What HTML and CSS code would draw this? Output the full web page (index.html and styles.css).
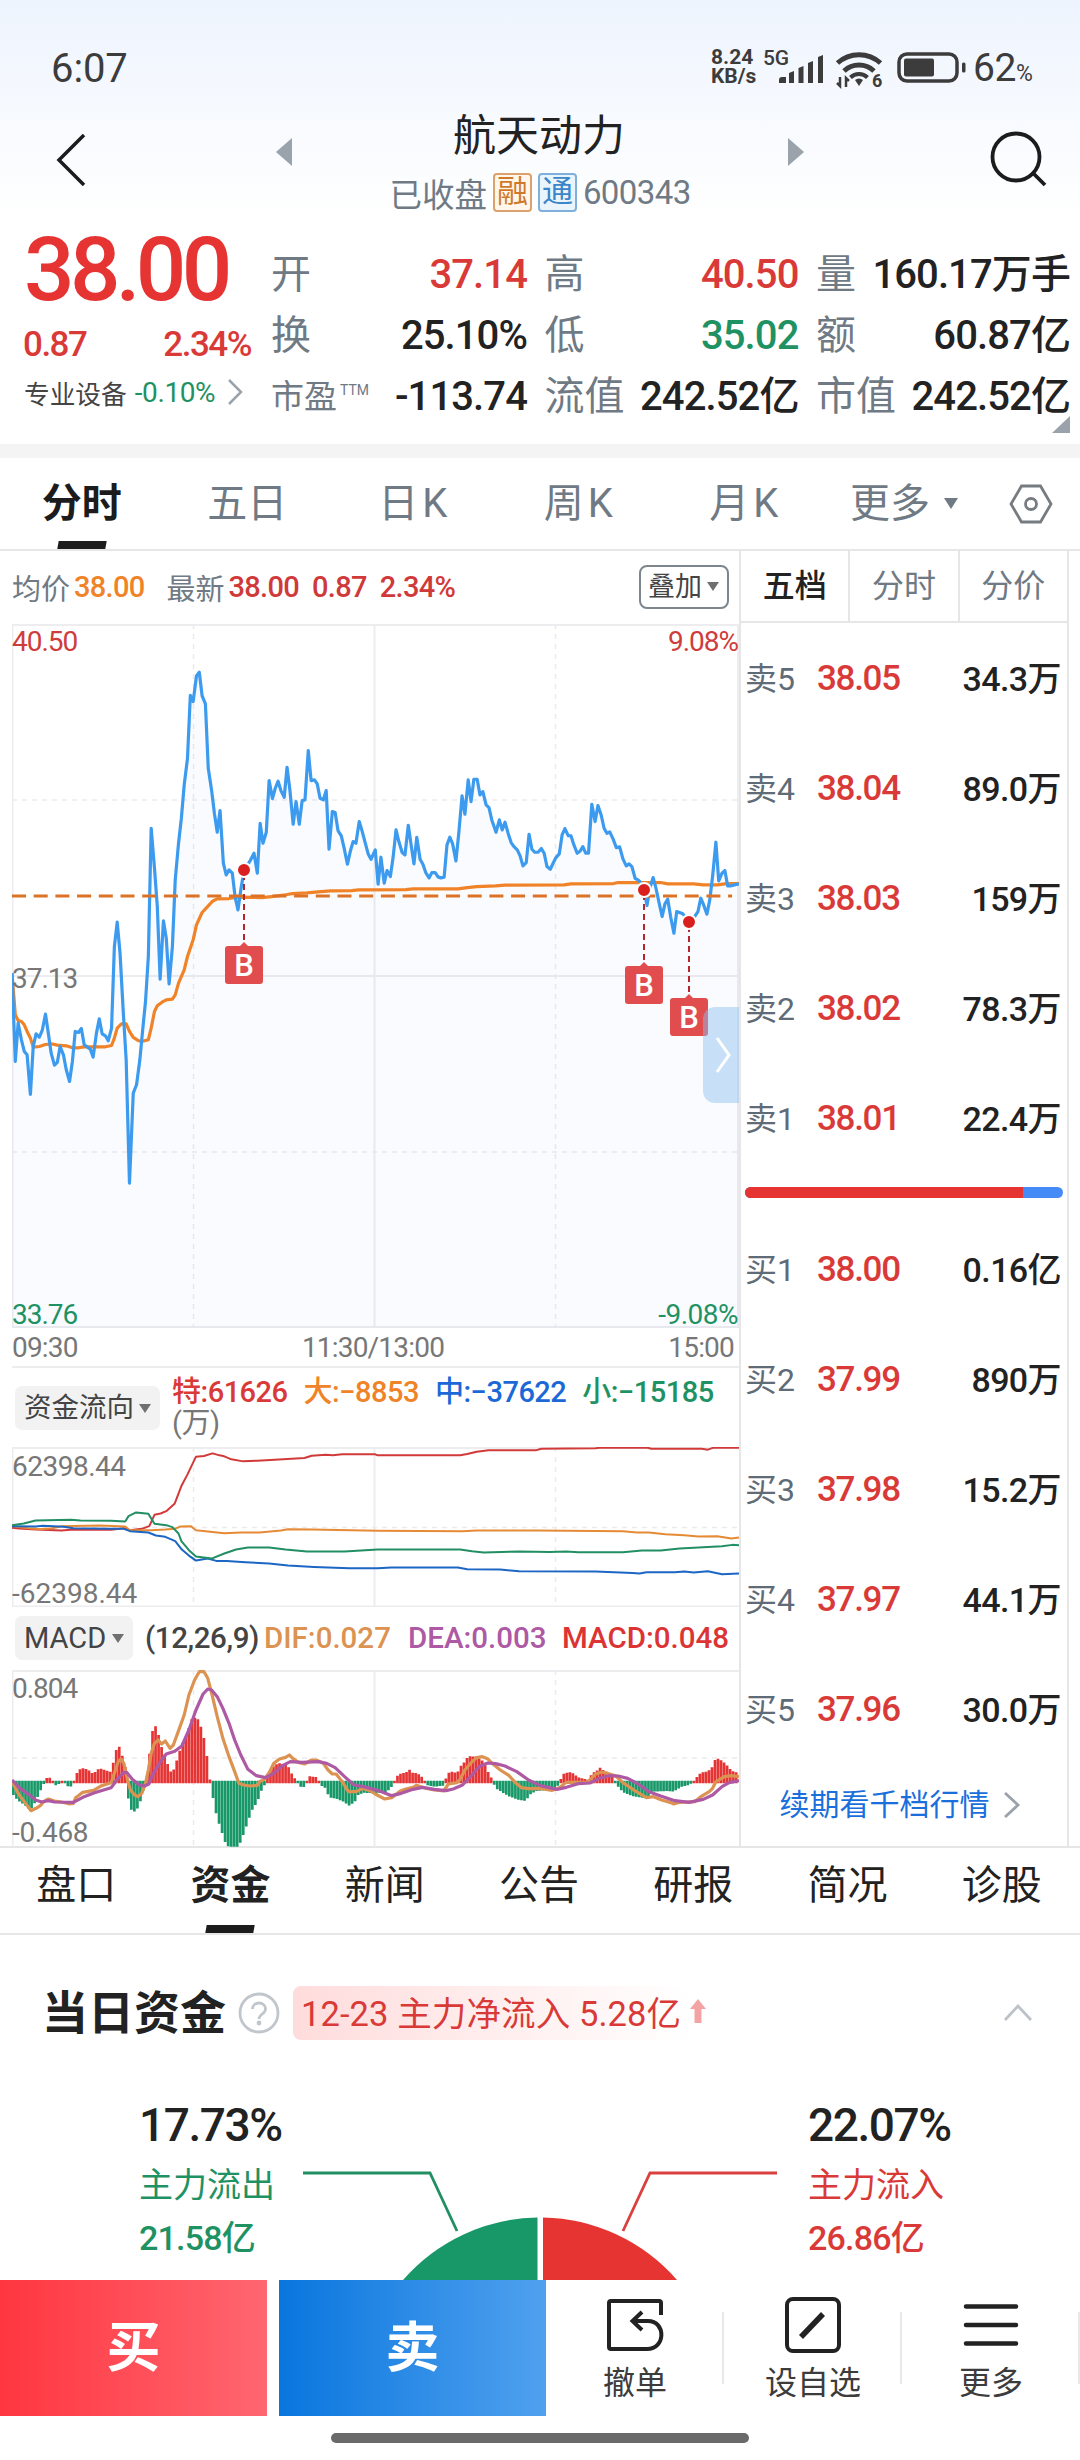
FILE: index.html
```html
<!DOCTYPE html>
<html lang="zh-CN">
<head>
<meta charset="utf-8">
<title>航天动力 600343</title>
<link rel="stylesheet" href="styles.css">
</head>
<body>
<div class="statusbar">
    <span class="clock">6:07</span>
    <div class="status-icons">
        <div class="speed"><span>8.24</span><span>KB/s</span></div>
        <div class="signal">
            <span class="net">5G</span>
            <svg width="46" height="30" viewBox="0 0 46 30" fill="#3c3c3c">
                <path d="M0 29v-3q0-3 3-3h4v6zM10 29V19l5-2v12zM19.500 29V14l5-2v17zM29 29V9l5-2v22zM39 29V3l5-2v28z"/>
            </svg>
        </div>
        <svg class="wifi" width="50" height="38" viewBox="0 0 50 38" fill="none" stroke="#3c3c3c" stroke-width="5">
            <path d="M2.500 12a32 32 0 0 1 43 0"/>
            <path d="M9 20a22 22 0 0 1 30 0"/>
            <path d="M15.500 26.500a12 12 0 0 1 17 0" stroke-width="4"/>
            <path d="M20 29a6 6 0 0 1 8 0l-4 6z" fill="#3c3c3c" stroke="none"/>
            <path d="M5 26v9l-3-3M11 36v-9l3 3" stroke-width="2.500"/>
            <text x="37" y="36" class="wifi-gen">6</text>
        </svg>
        <svg class="battery" width="70" height="32" viewBox="0 0 70 32">
            <rect x="2" y="2" width="58" height="27" rx="8" fill="none" stroke="#3c3c3c" stroke-width="3.500"/>
            <rect x="7" y="6.500" width="30" height="18" rx="2" fill="#3c3c3c"/>
            <rect x="65" y="10.500" width="3.500" height="10" rx="1.500" fill="#3c3c3c"/>
        </svg>
        <span class="power">62<small>%</small></span>
    </div>
</div>

<div class="header">
    <svg class="back" width="30" height="52" viewBox="0 0 30 52"><path d="M28 1L3 26l25 25" fill="none" stroke="#1c1c1c" stroke-width="3.500"/></svg>
    <svg class="prev" width="16" height="28" viewBox="0 0 16 28"><path d="M16 0v28L0 14z" fill="#9aa3ab"/></svg>
    <div class="title">
        <h1>航天动力</h1>
        <div class="subtitle"><span>已收盘</span><b class="badge orange">融</b><b class="badge blue">通</b><span class="num">600343</span></div>
    </div>
    <svg class="next" width="16" height="28" viewBox="0 0 16 28"><path d="M0 0v28L16 14z" fill="#9aa3ab"/></svg>
    <svg class="search" width="58" height="56" viewBox="0 0 58 56" fill="none" stroke="#1c1c1c" stroke-width="3.800"><circle cx="26" cy="26" r="23.500"/><path d="M42 41l13 13"/></svg>
</div>

<div class="quote">
    <div class="price">
        <div class="last">38.00</div>
        <div class="change"><span>0.87</span><span>2.34%</span></div>
        <div class="sector">
            <span>专业设备</span><span class="down">-0.10%</span>
            <svg width="16" height="26" viewBox="0 0 16 26"><path d="M2 1l12 12L2 25" fill="none" stroke="#9aa3ab" stroke-width="2.500"/></svg>
        </div>
    </div>
    <div class="stats">
        <div class="stat"><span>开</span><b class="up">37.14</b></div>
        <div class="stat"><span>高</span><b class="up">40.50</b></div>
        <div class="stat"><span>量</span><b>160.17万手</b></div>
        <div class="stat"><span>换</span><b>25.10%</b></div>
        <div class="stat"><span>低</span><b class="down">35.02</b></div>
        <div class="stat"><span>额</span><b>60.87亿</b></div>
        <div class="stat"><span class="small">市盈<sup>TTM</sup></span><b>-113.74</b></div>
        <div class="stat"><span>流值</span><b>242.52亿</b></div>
        <div class="stat"><span>市值</span><b>242.52亿</b></div>
    </div>
    <svg class="corner" width="18" height="17" viewBox="0 0 18 17"><path d="M18 0v17H0z" fill="#9aa3ab"/></svg>
</div>

<div class="band"></div>

<div class="period">
    <div class="tab active">分时</div>
    <div class="tab">五日</div>
    <div class="tab kline">日<span>K</span></div>
    <div class="tab kline">周<span>K</span></div>
    <div class="tab kline">月<span>K</span></div>
    <div class="tab more">更多<i class="caret"></i></div>
    <svg class="setting" width="44" height="40" viewBox="0 0 44 40" fill="none" stroke="#777c80" stroke-width="2.800"><path d="M12.500 2h19L42 20 31.500 38h-19L2 20z"/><circle cx="22" cy="20" r="5.500"/></svg>
</div>

<div class="main">
    <div class="charts">
        <div class="info">
            <span>均价</span><b class="avg">38.00</b>
            <span class="gap">最新</span><b>38.00</b><b>0.87</b><b>2.34%</b>
            <div class="overlay-btn">叠加<i class="caret"></i></div>
        </div>

        <div class="plot price-plot">
            <svg class="grid" width="727" height="704" viewBox="0 0 727 704">
                <path class="solid" d="M0 1h727M0 703h727M.500 0v704M362.500 0v704M726 0v704M0 352h727"/>
                <path class="dash" d="M181.500 0v704M543.500 0v704M0 176h727M0 528h727"/>
            </svg>
            <svg class="series" viewBox="25 252 1541 2113" preserveAspectRatio="none">
                <polygon id="area" class="area"/>
                <polyline id="avg" stroke="#f08327" class="w3"/>
                <polyline id="price" stroke="#3d9bef" class="w3"/>
            </svg>
            <svg class="grid" width="727" height="704" viewBox="0 0 727 704">
                <path d="M0 272h720" stroke="#dd7226" stroke-width="3" stroke-dasharray="14 7.700"/>
                <g class="marks">
                    <path d="M232 250v72M632 270v72M677 302v72" stroke="#b3262c" stroke-width="2" stroke-dasharray="6 4"/>
                    <circle cx="232" cy="246" r="7"/><circle cx="632" cy="266" r="7"/><circle cx="677" cy="298" r="7"/>
                    <path class="flag" d="M216 322h12l4-4 4 4h12q3 0 3 3v32q0 3-3 3h-32q-3 0-3-3v-32q0-3 3-3z"/>
                    <path class="flag" d="M616 342h12l4-4 4 4h12q3 0 3 3v32q0 3-3 3h-32q-3 0-3-3v-32q0-3 3-3z"/>
                    <path class="flag" d="M661 374h12l4-4 4 4h12q3 0 3 3v32q0 3-3 3h-32q-3 0-3-3v-32q0-3 3-3z"/>
                    <text x="232" y="352">B</text><text x="632" y="372">B</text><text x="677" y="404">B</text>
                </g>
            </svg>
            <span class="label tl up">40.50</span>
            <span class="label tr up">9.08%</span>
            <span class="label ml">37.13</span>
            <span class="label bl down">33.76</span>
            <span class="label br down">-9.08%</span>
            <div class="drawer"><svg width="16" height="36" viewBox="0 0 16 36"><path d="M2 1l12 17L2 35" fill="none" stroke="#fff" stroke-width="3"/></svg></div>
        </div>
        <div class="times"><span>09:30</span><span>11:30/13:00</span><span>15:00</span></div>

        <div class="flow-head">
            <div class="select">资金流向<i class="caret"></i></div>
            <div class="legend">
                <span class="up">特:61626</span><span class="avg">大:−8853</span><span class="mid">中:−37622</span><span class="down">小:−15185</span>
                <span class="unit">(万)</span>
            </div>
        </div>
        <div class="plot flow-plot">
            <svg class="grid" width="727" height="160" viewBox="0 0 727 160">
                <path class="solid" d="M0 1h727M0 159.500h727M.500 0v160M362.500 0v160"/>
                <path class="dash" d="M181.500 0v160M543.500 0v160M0 80.500h727"/>
            </svg>
            <svg class="series" viewBox="25 263 1541 479" preserveAspectRatio="none">
                <polyline id="flow-xl" stroke="#d23a3a" class="w2"/>
                <polyline id="flow-l" stroke="#e58a35" class="w2"/>
                <polyline id="flow-m" stroke="#1c66c4" class="w2"/>
                <polyline id="flow-s" stroke="#218f63" class="w2"/>
            </svg>
            <span class="label tl">62398.44</span>
            <span class="label bl">-62398.44</span>
        </div>

        <div class="macd-head">
            <div class="select">MACD<i class="caret"></i></div>
            <span class="args">(12,26,9)</span><span class="dif">DIF:0.027</span><span class="dea">DEA:0.003</span><span class="macd">MACD:0.048</span>
        </div>
        <div class="plot macd-plot">
            <svg class="grid" width="727" height="177" viewBox="0 0 727 177">
                <path class="solid" d="M0 1h727M.500 0v177M362.500 0v177"/>
                <path class="dash" d="M181.500 0v177M543.500 0v177M0 88h727"/>
            </svg>
            <svg class="series" viewBox="25 180 1541 531" preserveAspectRatio="none">
                <path id="bars-up" stroke="#e53434"/>
                <path id="bars-down" stroke="#189868"/>
                <polyline id="dif" stroke="#dc9352" class="w3"/>
                <polyline id="dea" stroke="#ae59a4" class="w3"/>
            </svg>
            <span class="label tl">0.804</span>
            <span class="label bl">-0.468</span>
        </div>
    </div>

    <div class="book">
        <div class="book-tabs"><span class="active">五档</span><span>分时</span><span>分价</span></div>
        <div class="levels">
            <div class="level"><span>卖5</span><b>38.05</b><em>34.3万</em></div>
            <div class="level"><span>卖4</span><b>38.04</b><em>89.0万</em></div>
            <div class="level"><span>卖3</span><b>38.03</b><em>159万</em></div>
            <div class="level"><span>卖2</span><b>38.02</b><em>78.3万</em></div>
            <div class="level"><span>卖1</span><b>38.01</b><em>22.4万</em></div>
        </div>
        <div class="ratio"><i></i></div>
        <div class="levels">
            <div class="level"><span>买1</span><b>38.00</b><em>0.16亿</em></div>
            <div class="level"><span>买2</span><b>37.99</b><em>890万</em></div>
            <div class="level"><span>买3</span><b>37.98</b><em>15.2万</em></div>
            <div class="level"><span>买4</span><b>37.97</b><em>44.1万</em></div>
            <div class="level"><span>买5</span><b>37.96</b><em>30.0万</em></div>
        </div>
        <div class="renew">续期看千档行情<svg width="18" height="26" viewBox="0 0 18 26"><path d="M2 1l13 12L2 25" fill="none" stroke="#9aa3ab" stroke-width="2.800"/></svg></div>
    </div>
</div>

<div class="subtabs">
    <div class="tab">盘口</div>
    <div class="tab active">资金</div>
    <div class="tab">新闻</div>
    <div class="tab">公告</div>
    <div class="tab">研报</div>
    <div class="tab">简况</div>
    <div class="tab">诊股</div>
</div>

<div class="funds">
    <div class="funds-head">
        <h2>当日资金</h2>
        <svg class="help" width="42" height="42" viewBox="0 0 42 42" fill="none" stroke="#c0c6cb" stroke-width="2.800">
            <circle cx="21" cy="21" r="19"/>
            <path d="M14.500 17c0-8 13-8 13 0 0 5-6.500 5-6.500 10"/>
            <circle cx="21" cy="31" r="1" fill="#c0c6cb"/>
        </svg>
        <div class="tag">12-23 主力净流入 5.28亿
            <svg width="16" height="24" viewBox="0 0 16 24"><path d="M8 0l8 10h-4.500v14h-7V10H0z" fill="#f3a3a3"/></svg>
        </div>
        <svg class="fold" width="30" height="18" viewBox="0 0 30 18"><path d="M2 16L15 2l13 14" fill="none" stroke="#bcc2c8" stroke-width="2.800"/></svg>
    </div>
    <div class="pie">
        <div class="side down"><strong>17.73%</strong><span>主力流出</span><span class="num">21.58亿</span></div>
        <svg width="476" height="180" viewBox="0 0 476 180">
            <path d="M1 73h127l27 58" fill="none" stroke="#218f63" stroke-width="2.800"/>
            <path d="M475 73H348l-27 58" fill="none" stroke="#d9403e" stroke-width="2.800"/>
            <path d="M235.500 117.500V180H101A182 182 0 0 1 235.500 117.500z" fill="#189868"/>
            <path d="M241 117.500V180H375A182 182 0 0 0 241 117.500z" fill="#e63433"/>
        </svg>
        <div class="side up"><strong>22.07%</strong><span>主力流入</span><span class="num">26.86亿</span></div>
    </div>
</div>

<div class="bottombar">
    <div class="trade buy">买</div>
    <div class="trade sell">卖</div>
    <div class="action">
        <svg width="58" height="58" viewBox="0 0 58 58" fill="none" stroke="#222" stroke-width="4">
            <path d="M55 19V7q0-2-2-2H5q-2 0-2 2v44q0 2 2 2h36c19 0 19-28 1-28H28"/>
            <path d="M36 16l-9.500 9 9.500 9"/>
        </svg>
        <span>撤单</span>
    </div>
    <div class="action">
        <svg width="58" height="58" viewBox="0 0 58 58" fill="none" stroke="#222" stroke-width="4">
            <rect x="3" y="3" width="52" height="52" rx="6"/><path d="M17 41l22-23" stroke-width="5.500"/>
        </svg>
        <span>设自选</span>
    </div>
    <div class="action">
        <svg width="58" height="58" viewBox="0 0 58 58" fill="none" stroke="#222" stroke-width="4.500" stroke-linecap="round"><path d="M4 10.500h50M4 29h50M4 47.500h50"/></svg>
        <span>更多</span>
    </div>
</div>
<div class="home"><i></i></div>
<script src="charts.js"></script>
</body>
</html>
```

FILE: styles.css
```css
* {
    box-sizing: border-box;
}

body {
    margin: 0;
    width: 1080px;
    height: 2460px;
    overflow: hidden;
    font-family: Roboto, "Noto Sans CJK SC", sans-serif;
    color: #222;
    background: #fff linear-gradient(#eef4fe, #fff 220px) no-repeat;
}

svg {
    display: block;
    flex: none;
}

h1, h2, b, em, strong {
    margin: 0;
    font-weight: 500;
    font-style: normal;
}

.up { color: #d93a38; }
.down { color: #1f9264; }
.avg { color: #f08327; }
.mid { color: #1b68d6; }

.caret {
    display: inline-block;
    border: 6px solid transparent;
    border-top: 9px solid #707070;
    border-bottom: 0;
}

/* status bar */
.statusbar {
    display: flex;
    justify-content: space-between;
    height: 108px;
    padding: 44px 44px 0 51px;
    color: #3c3c3c;
}

.clock {
    font-size: 40px;
    line-height: 49px;
    letter-spacing: -0.1px;
}

.status-icons {
    display: flex;
    align-items: flex-start;
}

.speed {
    display: flex;
    flex-direction: column;
    width: 51px;
    font-size: 21px;
    font-weight: 700;
    line-height: 19px;
    padding-top: 4px;
}

.signal {
    position: relative;
    width: 73px;
    padding: 10px 0 0 17px;
}

.net {
    position: absolute;
    left: 1px;
    top: 3px;
    font-size: 21px;
    font-weight: 500;
    line-height: 22px;
    letter-spacing: -0.3px;
}

.wifi { margin-top: 7px; }

.wifi-gen {
    font-size: 18px;
    font-weight: 700;
    fill: #3c3c3c;
    stroke: none;
}

.battery { margin: 8px 0 0 12px; }

.power {
    width: 63px;
    margin-left: 6px;
    font-size: 39px;
    line-height: 49px;
    letter-spacing: -0.4px;
    white-space: nowrap;
}

.power small {
    font-size: 23px;
}

/* header */
.header {
    display: flex;
    height: 112px;
    padding: 0 32px 0 56px;
}

.back { margin-top: 26px; }
.prev { margin: 30px 0 0 190px; }
.next { margin-top: 30px; }
.search { margin: 23px 0 0 auto; }

.title {
    width: 496px;
    text-align: center;
}

.title h1 {
    font-size: 43px;
    font-weight: 400;
    line-height: 60px;
    margin: -2px 2px 0 0;
}

.subtitle {
    display: flex;
    justify-content: center;
    align-items: center;
    gap: 6px;
    height: 44px;
    margin-top: 4px;
    font-size: 32.500px;
    color: #6f7a84;
}

.subtitle .num {
    font-size: 33px;
    letter-spacing: -0.6px;
}

.badge {
    width: 39px;
    height: 39px;
    font-size: 31px;
    font-weight: 400;
    line-height: 34px;
    text-align: center;
    border: 2px solid;
    border-radius: 4px;
}

.badge.orange {
    color: #cf7a2b;
    border-color: #dba26d;
    background: #fff6ec;
}

.badge.blue {
    color: #3a86c8;
    border-color: #7fb0dc;
    background: #eaf4fd;
}

/* quote */
.quote {
    position: relative;
    display: flex;
    height: 224px;
    padding-left: 24px;
}

.price {
    width: 247px;
}

.last {
    height: 84px;
    margin-top: 8px;
    font-size: 89px;
    font-weight: 500;
    line-height: 84px;
    letter-spacing: -4.700px;
    color: #e63433;
}

.change {
    display: flex;
    justify-content: space-between;
    width: 228px;
    height: 44px;
    margin: 10px 0 0 -1px;
    font-size: 35px;
    font-weight: 500;
    line-height: 46px;
    letter-spacing: -1.500px;
    color: #d93a38;
}

.sector {
    display: flex;
    align-items: center;
    height: 36px;
    margin-top: 8px;
    font-size: 25.700px;
    color: #444;
}

.sector .down {
    margin: 0 12px 0 8px;
    font-size: 28px;
    letter-spacing: -0.4px;
}

.stats {
    display: grid;
    grid-template-columns: 256px 254px 254px;
    grid-auto-rows: 61px;
    column-gap: 17.500px;
    width: 799px;
    padding-top: 24px;
}

.stat {
    display: flex;
    justify-content: space-between;
    align-items: center;
    font-size: 40px;
    line-height: 61px;
    color: #6f7a84;
    white-space: nowrap;
}

.stat b {
    font-size: 40px;
    letter-spacing: -0.9px;
    color: #222;
}

.stat b.up { color: #d93a38; }
.stat b.down { color: #1f9264; }
.stat .small { font-size: 33px; }

.stat sup {
    margin-left: 3px;
    font-size: 14px;
    line-height: 0;
    vertical-align: 13px;
}

.corner {
    position: absolute;
    right: 10px;
    bottom: 11px;
}

.band {
    height: 14px;
    background: #f4f4f4;
}

/* tabs */
.period {
    display: flex;
    height: 93px;
    border-bottom: 2px solid #e6e6e6;
}

.tab {
    position: relative;
    width: 165.500px;
    font-size: 40px;
    line-height: 92px;
    text-align: center;
    color: #6f7a84;
}

.period .tab { left: -1px; }

.kline span { margin-left: 4px; }

.tab.active {
    font-weight: 700;
    color: #1c1c1c;
}

.tab.active::after {
    content: "";
    position: absolute;
    left: 50%;
    bottom: 0;
    width: 48px;
    height: 8px;
    margin-left: -24px;
    background: #1c1c1c;
    transform: skewX(-10deg);
}

.tab.more {
    width: 155px;
}

.more .caret {
    margin-left: 14px;
    vertical-align: 8px;
    border-width: 11px 7px 0;
    border-top-color: #6f7a84;
}

.setting { margin: 26px 0 0 26px; }

/* charts */
.main {
    display: flex;
    height: 1297px;
    border-bottom: 2px solid #e6e6e6;
}

.charts {
    width: 739px;
    padding-left: 12px;
}

.info {
    display: flex;
    align-items: center;
    height: 73px;
    padding-bottom: 2px;
    font-size: 29px;
    color: #6f7a84;
}

.info b {
    margin: 0 13px 0 4px;
    color: #d0393a;
    letter-spacing: -0.7px;
}

.info b + b { margin-left: 0; }
.info b.avg { color: #f08327; }
.info .gap { margin-left: 9px; }

.overlay-btn {
    display: flex;
    align-items: center;
    gap: 5px;
    width: 90px;
    height: 44px;
    margin-left: auto;
    margin-right: 10px;
    padding-left: 7px;
    font-size: 27px;
    line-height: 38px;
    color: #444;
    border: 2px solid #7e868d;
    border-radius: 8px;
}

.plot {
    position: relative;
    width: 727px;
}

.price-plot { height: 704px; }
.flow-plot { height: 160px; }
.macd-plot { height: 177px; }

.grid, .series {
    position: absolute;
    left: 0;
    top: 0;
    fill: none;
}

.series {
    width: 100%;
    height: 100%;
}

.series polyline {
    stroke-linejoin: round;
    vector-effect: non-scaling-stroke;
}

.series path { stroke-width: 5.700; }
.w2 { stroke-width: 2; }
.w3 { stroke-width: 3.200; }

.area { fill: rgba(61, 120, 239, 0.03); }

.solid {
    stroke: #ededf0;
    stroke-width: 2;
}

.dash {
    stroke: #ebebee;
    stroke-width: 1.500;
    stroke-dasharray: 5 5;
}

.marks circle {
    fill: #d9201f;
    stroke: #fff;
    stroke-width: 2;
}

.flag { fill: #e14d4f; }

.marks text {
    font-size: 31px;
    font-weight: 500;
    text-anchor: middle;
    fill: #fff;
}

.label {
    position: absolute;
    font-size: 28px;
    line-height: 34px;
    letter-spacing: -1px;
    color: #777;
}

.label.up { color: #cf3c3c; }
.label.down { color: #1f9264; }
.tl { left: 0; top: 1px; }
.tr { right: 1px; top: 1px; }
.ml { left: 0; top: 338px; }
.bl { left: 0; bottom: -4px; }
.br { right: 1px; bottom: -4px; letter-spacing: -0.5px; }
.flow-plot .tl { top: 3px; letter-spacing: -0.5px; }
.flow-plot .bl { letter-spacing: 0; }
.macd-plot .tl { top: 2px; }
.macd-plot .bl { bottom: -3px; letter-spacing: -0.3px; }

.drawer {
    position: absolute;
    right: 0;
    top: 383px;
    width: 36px;
    height: 96px;
    padding: 30px 0 0 12px;
    background: rgba(144, 193, 240, 0.470);
    border-radius: 12px 0 0 12px;
}

.times {
    display: flex;
    justify-content: space-between;
    height: 40px;
    padding-right: 5px;
    font-size: 28px;
    line-height: 39px;
    letter-spacing: -0.8px;
    color: #777;
    border-bottom: 2px solid #ededed;
}

.flow-head {
    display: flex;
    height: 79px;
}

.select {
    display: flex;
    align-items: center;
    justify-content: space-between;
    width: 145px;
    height: 44px;
    margin: 18px 0 0 3px;
    padding: 0 9px;
    font-size: 27.500px;
    line-height: 42px;
    color: #444;
    background: #f2f2f2;
    border-radius: 7px;
}

.legend {
    display: flex;
    flex-wrap: wrap;
    align-content: flex-start;
    width: 576px;
    padding: 7px 0 0 12px;
    font-size: 29px;
    column-gap: 16px;
}

.legend span {
    font-weight: 500;
    letter-spacing: -0.5px;
    line-height: 34px;
}

.legend .unit {
    width: 100%;
    margin-top: -3px;
    font-weight: 400;
    color: #777;
}

.macd-head {
    display: flex;
    height: 63px;
    font-size: 29.500px;
    line-height: 63px;
    white-space: nowrap;
}

.macd-head .select {
    width: 118px;
    margin-top: 9px;
    font-size: 29px;
    line-height: 44px;
}

.args { margin-left: 12px; width: 119px; font-weight: 500; color: #444; letter-spacing: -0.4px; }
.dif { width: 144px; color: #dc9352; font-weight: 500; }
.dea { width: 154px; color: #ae59a4; font-weight: 500; }
.macd { color: #dc3434; font-weight: 500; }

/* order book */
.book {
    width: 330px;
    border-left: 2px solid #e6e6e6;
    border-right: 2px solid #e6e6e6;
}

.book-tabs {
    display: flex;
    height: 72px;
    border-bottom: 2px solid #e6e6e6;
}

.book-tabs span {
    flex: 1;
    font-size: 32px;
    line-height: 70px;
    text-align: center;
    color: #6f7a84;
}

.book-tabs span + span { border-left: 2px solid #e6e6e6; }

.book-tabs .active {
    font-weight: 500;
    color: #222;
}

.level {
    display: flex;
    align-items: center;
    height: 110px;
    padding: 0 6px 0 4px;
}

.level span {
    width: 72px;
    margin-top: -4px;
    font-size: 32px;
    color: #5f6b76;
}

.level b {
    font-size: 35px;
    letter-spacing: -1.300px;
    color: #d93a38;
}

.level em {
    margin: -3px 0 0 auto;
    font-size: 34px;
    letter-spacing: -0.6px;
}

.ratio {
    height: 11px;
    margin: 14px 4px 16px;
    background: #448bf8;
    border-radius: 6px;
    overflow: hidden;
}

.ratio i {
    display: block;
    width: 87.400%;
    height: 100%;
    background: #e63433;
}

.renew {
    display: flex;
    align-items: center;
    justify-content: center;
    gap: 13px;
    height: 82px;
    padding-right: 8px;
    font-size: 30px;
    line-height: 40px;
    color: #1b6fdc;
}

/* sub tabs */
.subtabs {
    display: flex;
    height: 87px;
    border-bottom: 2px solid #e6e6e6;
}

.subtabs .tab {
    flex: 1;
    left: -1px;
    line-height: 75px;
    color: #222;
}

/* funds */
.funds {
    height: 345px;
    overflow: hidden;
}

.funds-head {
    display: flex;
    align-items: center;
    height: 155px;
    padding: 0 47px 0 42px;
}

.funds-head h2 {
    font-size: 46px;
    font-weight: 700;
    margin-top: -8px;
}

.help { margin-left: 12px; }

.tag {
    display: flex;
    align-items: center;
    gap: 9px;
    height: 54px;
    margin-left: 13px;
    padding-left: 8px;
    padding-bottom: 3px;
    font-size: 34.500px;
    letter-spacing: 0.1px;
    color: #d93a38;
    background: linear-gradient(90deg, #ffdcdc, #fff 96%);
    border-radius: 8px;
}

.fold { margin-left: auto; }

.pie {
    display: flex;
    padding: 10px 0 0 139px;
}

.side {
    display: flex;
    flex-direction: column;
    width: 163px;
    font-size: 34px;
    line-height: 53px;
    white-space: nowrap;
}

.side.up { padding-left: 30px; }

.side strong {
    font-size: 46px;
    line-height: 51px;
    letter-spacing: -1.400px;
    color: #222;
    padding-bottom: 8px;
}

.side .num {
    font-weight: 500;
    letter-spacing: -0.8px;
}

/* bottom bar */
.bottombar {
    display: flex;
    height: 136px;
    background: #fff;
}

.trade {
    width: 267px;
    margin-right: 12px;
    font-size: 54px;
    font-weight: 700;
    line-height: 138px;
    text-align: center;
    color: #fff;
}

.buy { background: linear-gradient(90deg, #ff3640, #ff6670); }

.sell {
    margin-right: 0;
    background: linear-gradient(90deg, #0976de, #50a1ee);
}

.action {
    position: relative;
    display: flex;
    flex-direction: column;
    align-items: center;
    width: 178px;
    padding-top: 16px;
    font-size: 32px;
    line-height: 52px;
    color: #3c3c3c;
}

.action span { margin-top: 3px; }

.action::after {
    content: "";
    position: absolute;
    right: 0;
    top: 32px;
    width: 2px;
    height: 72px;
    background: #e8e8e8;
}

.home {
    height: 44px;
    padding-top: 17px;
    background: #fff;
}

.home i {
    display: block;
    width: 418px;
    height: 10px;
    margin: 0 auto;
    background: #6a6a6a;
    border-radius: 5px;
}
```

FILE: charts.js
```js
// minute series, x runs 25..1566 over the trading day
var series = {
    'price': '25,1300 32,1565 38,1450 45,1500 51,1535 57,1545 64,1664 70,1520 76,1482 83,1492 89,1472 96,1423 102,1480 108,1540 115,1576 121,1568 127,1520 134,1545 140,1590 147,1625 153,1565 159,1475 166,1478 172,1466 178,1515 185,1522 191,1528 197,1552 204,1480 210,1437 216,1482 223,1488 229,1503 236,1465 242,1220 248,1147 254,1240 261,1420 267,1560 274,1930 282,1660 289,1635 296,1560 302,1470 308,1385 314,1250 320,865 327,985 333,1100 339,1318 346,1143 352,1195 358,1332 365,1220 371,1020 378,910 384,835 390,735 397,655 403,466 409,485 416,408 422,397 428,468 435,492 441,685 448,750 454,820 460,877 466,812 473,970 479,1005 485,990 492,1000 498,1072 504,1110 510,1050 517,990 530,962 538,940 545,1000 551,850 557,910 564,877 570,722 577,776 583,745 589,724 595,752 602,772 608,682 614,750 621,853 627,785 634,853 640,782 646,780 653,632 659,722 666,720 672,732 678,775 685,780 691,752 697,928 704,815 710,818 716,872 723,888 729,925 736,973 742,935 748,905 754,910 761,845 767,873 773,905 780,942 786,958 795,930 801,1033 807,952 814,1030 820,992 827,1010 833,950 839,870 845,905 852,938 858,945 865,856 871,915 877,972 883,892 890,958 896,973 902,998 909,1014 915,998 922,998 928,1011 934,1014 941,1012 947,915 953,892 959,912 966,963 972,880 979,768 985,823 992,720 998,785 1004,718 1011,718 1017,765 1023,755 1030,795 1036,803 1042,840 1051,877 1058,840 1064,870 1070,847 1077,882 1083,908 1089,920 1096,930 1102,948 1108,978 1115,968 1121,883 1127,928 1133,937 1140,937 1147,926 1153,940 1159,980 1166,988 1172,970 1178,953 1185,942 1191,885 1197,866 1204,887 1210,888 1216,915 1223,940 1229,934 1235,920 1241,940 1247,940 1254,793 1261,845 1267,797 1274,826 1280,865 1286,880 1292,876 1299,897 1306,923 1313,921 1320,957 1327,978 1333,972 1339,980 1346,1016 1352,1020 1358,1028 1365,1050 1371,1097 1377,1045 1384,1013 1390,1045 1396,1085 1403,1130 1409,1092 1415,1078 1421,1130 1428,1180 1434,1115 1447,1122 1460,1146 1472,1130 1479,1115 1485,1075 1491,1095 1498,1123 1504,1080 1510,1010 1517,907 1523,1023 1530,1000 1536,992 1542,1038 1548,1038 1566,1032',
    'avg': '25,1300 32,1425 38,1442 45,1445 51,1455 57,1475 64,1495 70,1522 83,1520 96,1514 108,1512 121,1516 140,1518 153,1524 166,1524 178,1521 223,1521 236,1517 242,1495 248,1465 257,1452 267,1452 274,1475 282,1493 292,1502 300,1505 314,1500 320,1465 327,1415 333,1398 343,1387 352,1380 365,1378 371,1365 378,1330 390,1290 397,1250 409,1200 416,1155 428,1118 441,1098 450,1084 460,1077 485,1076 504,1072 555,1073 575,1070 600,1066 620,1061 650,1059 680,1055 700,1053 745,1052 760,1050 860,1049 875,1047 970,1047 990,1043 1010,1040 1050,1038 1070,1036 1195,1035 1210,1032 1300,1031 1310,1028 1400,1028 1415,1032 1470,1032 1490,1035 1520,1035 1540,1031 1566,1031',
    'flow-xl': '25,505 40,507 75,510 130,513 150,511 235,511 262,506 275,512 300,508 316,500 327,466 340,462 352,455 370,432 384,380 397,345 415,292 432,290 450,282 465,288 475,291 490,300 515,306 545,304 600,300 645,296 660,289 690,286 705,288 725,285 795,285 800,288 975,288 990,284 1010,277 1035,273 1135,273 1147,268 1262,267 1270,265 1372,265 1380,268 1487,268 1500,271 1512,265 1566,265',
    'flow-l': '25,500 60,506 85,509 110,506 130,500 210,498 265,501 275,512 320,512 350,510 370,508 382,501 404,500 415,512 440,516 475,521 510,519 550,519 595,513 610,509 660,510 800,514 980,515 1010,513 1140,513 1320,515 1350,519 1375,519 1410,524 1450,527 1480,531 1520,530 1550,537 1566,534',
    'flow-m': '25,500 75,501 90,499 135,502 155,506 235,508 262,508 275,515 314,519 330,528 350,532 371,545 385,570 400,588 415,603 440,597 458,604 480,604 520,608 570,612 610,618 665,622 740,626 800,626 830,624 970,624 990,629 1060,630 1100,635 1262,636 1340,640 1355,642 1370,638 1430,638 1450,636 1470,639 1500,635 1530,644 1566,642',
    'flow-s': '25,497 50,492 75,483 150,481 170,483 235,484 265,486 272,470 288,459 314,463 327,493 352,497 365,503 378,522 384,545 400,572 415,591 448,597 475,582 500,570 525,564 570,564 605,570 650,576 730,576 800,570 975,570 1000,575 1025,579 1100,576 1165,577 1200,576 1225,578 1320,578 1360,573 1400,573 1440,567 1490,563 1530,560 1552,556 1566,557',
    'dif': '25,515 38,550 51,575 65,602 76,595 85,587 92,575 102,567 115,573 130,576 147,582 155,580 160,563 175,547 198,541 215,527 235,518 242,490 250,455 256,447 262,460 270,510 276,540 285,555 292,560 300,550 308,520 314,480 320,430 327,400 335,390 342,402 350,393 360,415 367,405 376,370 390,315 400,255 412,210 422,185 432,185 440,205 450,260 460,320 472,385 485,440 497,485 506,520 516,525 530,528 545,526 550,515 560,508 570,488 580,460 592,447 605,442 613,435 620,445 632,457 645,462 660,450 670,450 685,460 695,480 704,492 712,492 725,515 738,545 755,545 768,535 785,543 795,552 815,567 830,563 848,543 860,537 875,532 882,526 900,534 920,540 940,543 950,522 968,518 975,508 985,480 1000,455 1010,443 1022,440 1033,446 1045,463 1060,480 1078,496 1090,515 1105,533 1120,536 1145,535 1170,541 1185,533 1200,517 1225,517 1245,517 1262,492 1275,486 1285,489 1305,498 1320,518 1345,542 1370,563 1385,560 1402,570 1420,577 1428,582 1440,577 1472,575 1485,560 1503,545 1510,535 1517,515 1535,500 1550,497 1566,500',
    'dea': '25,510 40,533 60,553 75,570 88,576 102,572 115,576 155,577 175,562 200,548 235,533 250,505 262,487 268,487 280,508 295,525 306,528 315,522 325,490 340,455 352,432 370,424 385,408 400,360 415,300 430,252 440,237 448,240 460,260 472,295 485,340 497,390 510,435 525,478 543,497 562,503 580,490 598,467 615,455 640,457 675,455 692,460 710,473 730,500 750,525 770,530 800,541 830,557 850,550 875,538 895,532 920,538 945,542 960,537 980,525 1000,495 1015,470 1033,459 1050,461 1070,468 1095,485 1120,510 1145,527 1180,538 1200,532 1225,521 1250,519 1270,505 1290,497 1310,498 1330,505 1350,520 1375,545 1400,558 1430,572 1460,577 1490,568 1510,555 1530,530 1545,518 1566,512'
};

for (var id in series) {
    document.getElementById(id).setAttribute('points', series[id]);
}
document.getElementById('area').setAttribute('points', series.price + ' 1566,2365 25,2365');

// MACD histogram, one bar per minute
var hist = '28,555 38,572 50,583 64,600 76,573 83,548 90,530 96,507 102,500 108,507 115,525 121,527 127,517 134,510 140,525 147,532 153,526 159,500 165,482 172,474 185,478 197,492 210,474 222,480 235,486 242,443 248,408 254,411 261,450 267,480 273,592 283,606 290,598 297,575 303,545 308,520 314,470 320,375 327,345 333,355 339,400 346,425 352,445 358,480 365,490 371,465 378,435 384,405 397,375 403,330 409,325 416,321 422,335 428,362 435,402 441,468 447,535 454,585 460,628 466,648 473,682 479,705 485,710 505,710 510,694 517,668 524,640 530,615 537,590 545,580 550,550 557,535 562,520 565,510 570,485 578,470 590,459 605,465 614,475 620,500 627,508 634,530 646,531 653,498 672,502 680,526 690,535 697,562 710,565 725,573 740,587 752,575 757,556 770,548 795,550 820,545 830,530 839,502 845,492 860,488 867,478 873,488 885,490 897,505 904,525 920,530 940,527 948,490 960,484 968,492 975,470 985,455 992,438 1010,440 1025,455 1032,480 1040,500 1045,516 1050,535 1062,545 1080,560 1100,570 1114,573 1122,555 1135,543 1160,540 1180,532 1186,515 1192,493 1205,486 1215,490 1225,502 1248,510 1254,490 1262,485 1272,473 1280,482 1292,490 1300,507 1307,525 1320,547 1340,558 1370,565 1385,545 1415,543 1427,545 1445,530 1460,525 1467,518 1474,505 1485,488 1500,484 1510,470 1517,443 1530,452 1542,468 1550,482 1566,490'
    .split(' ').map(function (p) { return p.split(',').map(Number); });
var up = '', down = '', k = 0;

for (var i = 0; i < 240; i++) {
    var x = 28 + i * 6.41;
    while (k < hist.length - 2 && hist[k + 1][0] < x) k++;
    var a = hist[k], b = hist[k + 1];
    var y = a[1] + (b[1] - a[1]) * (x - a[0]) / (b[0] - a[0]);
    if (y < 516) {
        up += 'M' + x + ' 520V' + Math.min(y, 512);
    } else {
        down += 'M' + x + ' 512V' + Math.max(y, 520);
    }
}
document.getElementById('bars-up').setAttribute('d', up);
document.getElementById('bars-down').setAttribute('d', down);
```
